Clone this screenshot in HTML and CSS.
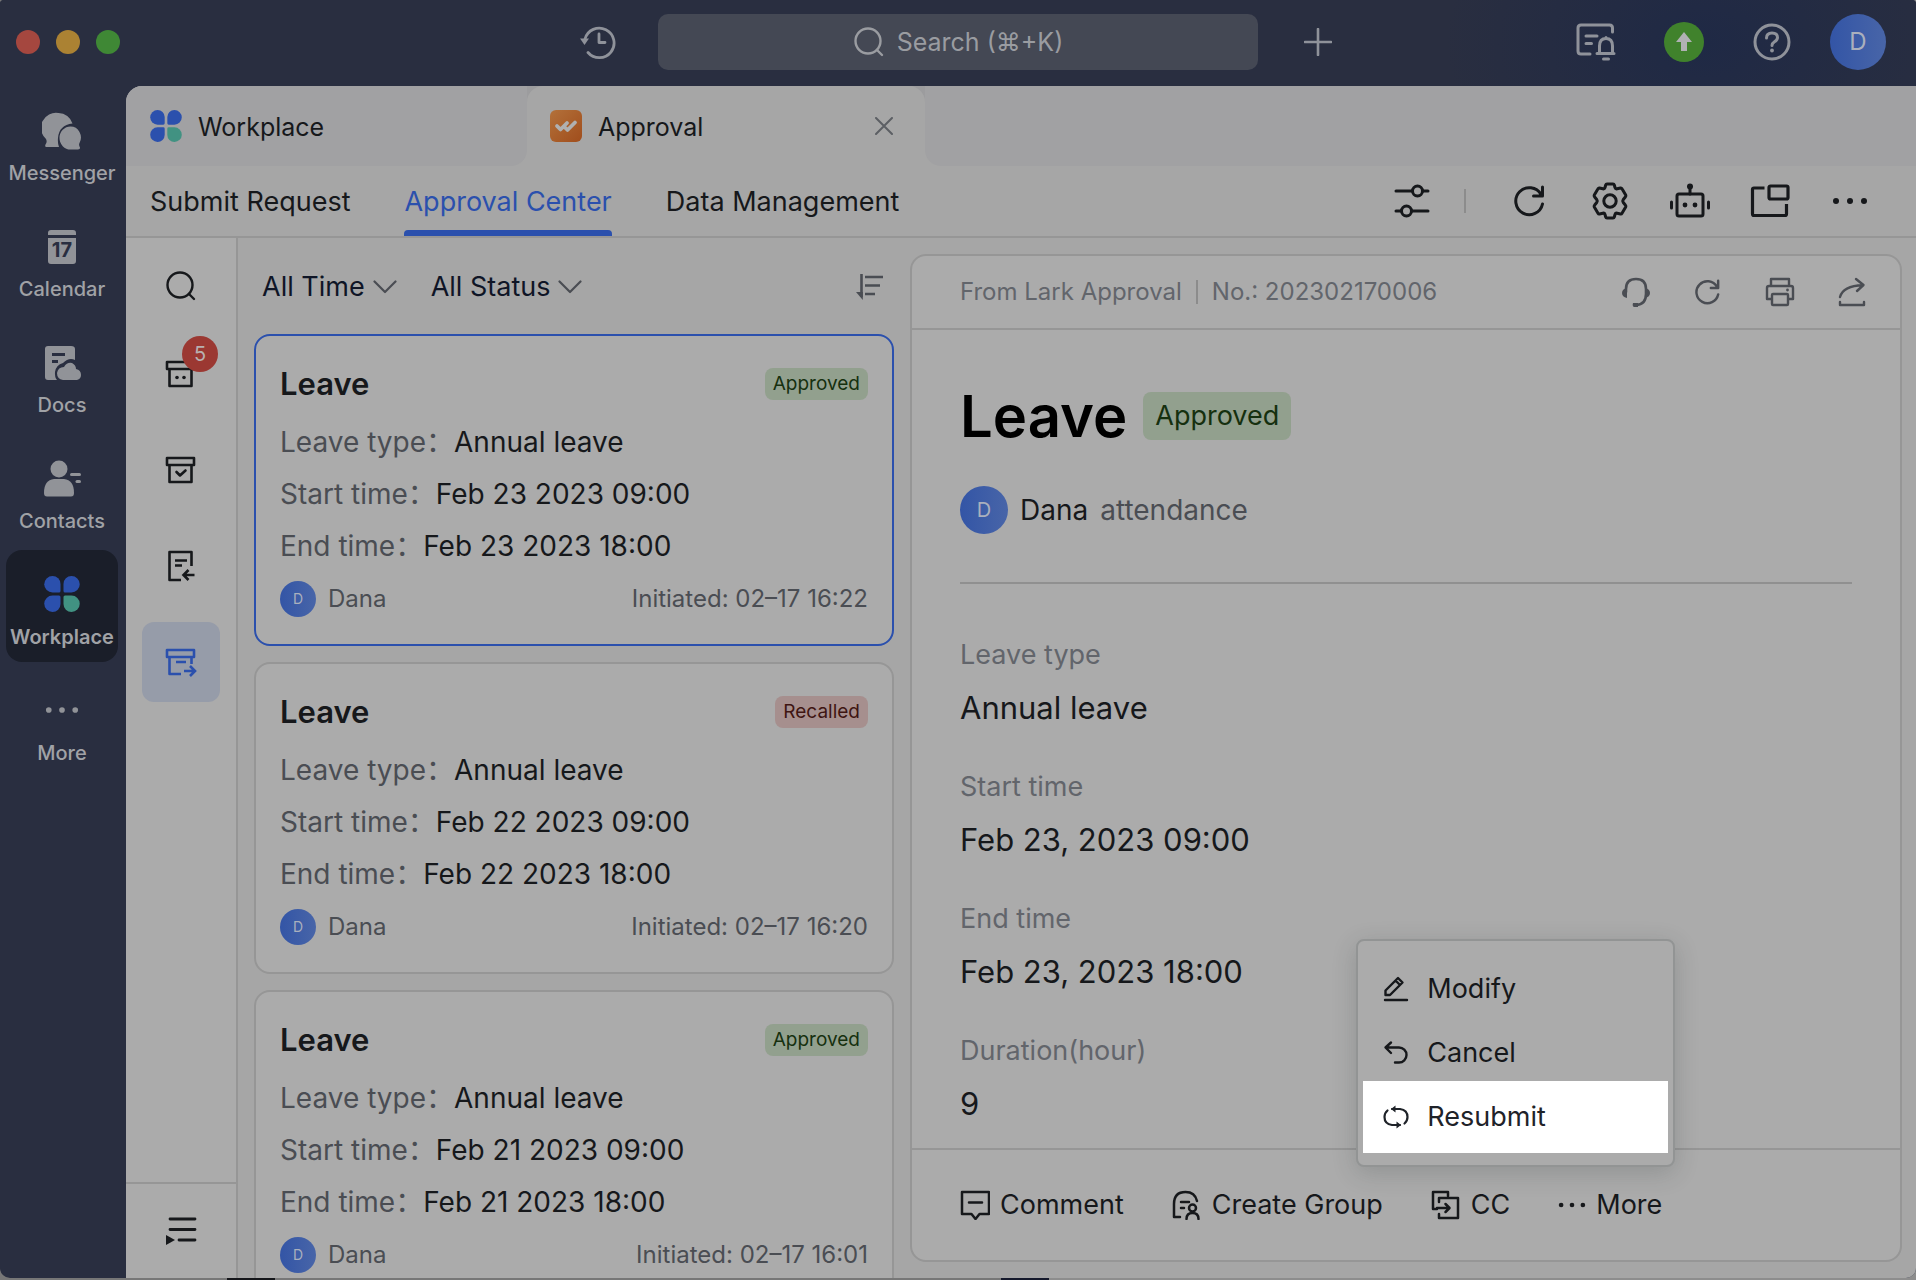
FILE: index.html
```html
<!DOCTYPE html>
<html lang="en">
<head>
<meta charset="utf-8">
<meta name="viewport" content="width=device-width, initial-scale=1">
<title>Approval</title>
<link rel="stylesheet" href="styles.css">
</head>
<body>
<svg class="sprite" aria-hidden="true">
  <symbol id="logo" viewBox="0 0 36 36">
    <g fill="#2b50ad"><path d="M8.500 0A8 8 0 0 1 16.500 8V15Q16.500 16.500 15 16.500H8.500A8.200 8.200 0 0 1 8.500 0Z"/><path d="M27.500 0A8 8 0 0 0 19.500 8V15Q19.500 16.500 21 16.500H27.500A8.200 8.200 0 0 0 27.500 0Z"/><path d="M8.500 36A8 8 0 0 0 16.500 28V21Q16.500 19.500 15 19.500H8.500A8.200 8.200 0 0 0 8.500 36Z"/></g>
    <path fill="#419282" d="M27.500 36A8 8 0 0 1 19.500 28V21Q19.500 19.500 21 19.500H27.500A8.200 8.200 0 0 1 27.500 36Z"/>
  </symbol>
  <symbol id="refresh" viewBox="0 0 32 32"><path d="M28.500 19A13.500 13.500 0 1 1 27 9.500M28.500 2V11H19.500" fill="none" stroke="currentColor" stroke-width="3" stroke-linecap="round" stroke-linejoin="round"/></symbol>
  <symbol id="dots" viewBox="0 0 36 36"><g fill="currentColor"><circle cx="4" cy="18" r="3"/><circle cx="18" cy="18" r="3"/><circle cx="32" cy="18" r="3"/></g></symbol>
  <symbol id="search" viewBox="0 0 32 32"><g fill="none" stroke="currentColor" stroke-width="2.400" stroke-linecap="round"><circle cx="15" cy="15" r="12.500"/><path d="M24 24L29 29"/></g></symbol>
  <symbol id="chevron" viewBox="0 0 24 14"><path d="M1.500 1.500L12 12L22.500 1.500" fill="none" stroke="currentColor" stroke-width="2.200" stroke-linecap="round" stroke-linejoin="round"/></symbol>
</svg>

<div class="app">
  <header class="topbar">
    <div class="lights"><span class="light red"></span><span class="light amber"></span><span class="light green"></span></div>
    <div class="top-center">
      <button class="icon-btn" aria-label="History"><svg width="36" height="36" viewBox="0 0 36 36"><g fill="none" stroke="currentColor" stroke-width="2.800" stroke-linecap="round" stroke-linejoin="round"><path d="M5 15A14.800 14.800 0 1 1 8 28.500"/><path d="M19 10V18.500H25"/></g><path fill="currentColor" d="M0 14.500H9L4.500 21Z"/></svg></button>
      <button class="search"><svg width="32" height="32"><use href="#search"/></svg><span>Search (⌘+K)</span></button>
      <button class="icon-btn plus" aria-label="New"><svg width="28" height="28" viewBox="0 0 28 28"><path d="M14 1V27M1 14H27" stroke="currentColor" stroke-width="2.600" stroke-linecap="round"/></svg></button>
    </div>
    <div class="top-right">
      <button class="icon-btn" aria-label="Notifications"><svg width="40" height="38" viewBox="0 0 40 38"><g fill="none" stroke="currentColor" stroke-width="3" stroke-linecap="round" stroke-linejoin="round"><path d="M36.500 9V5Q36.500 2 33.500 2H5Q2 2 2 5V28Q2 31 5 31H14"/><path d="M10 13H21M10 20.500H15.500"/><path d="M21 30.500H38M23.500 30V23Q23.500 15.500 30 15.500Q36.500 15.500 36.500 23V30M30 15.500V14.500M27.500 36H32.500"/></g></svg></button>
      <button class="upgrade" aria-label="Update"><svg width="20" height="22" viewBox="0 0 20 22"><path fill="#b0b1b3" d="M10 1L18 11H13V20H7V11H2Z"/></svg></button>
      <button class="icon-btn" aria-label="Help"><svg width="38" height="38" viewBox="0 0 38 38"><g fill="none" stroke="currentColor" stroke-width="3" stroke-linecap="round"><circle cx="19" cy="19" r="17"/><path d="M13.500 15Q13.500 10 19 10Q24.500 10 24.500 14.500Q24.500 17 21.500 18.800Q19 20.400 19 22.500"/></g><circle cx="19" cy="27.500" r="1.900" fill="currentColor"/></svg></button>
      <span class="avatar avatar-lg">D</span>
    </div>
  </header>

  <div class="body">
    <nav class="sidebar">
      <a href="#"><svg width="40" height="40" viewBox="0 0 40 40" fill="currentColor"><path d="M16.500 2A14.500 14.500 0 0 1 30.500 12.500Q17 14 16 27Q15.500 32 17 36H4.500Q2.500 36 3.500 33.500Q5.500 31 4 28A15 15 0 0 1 16.500 2Z"/><path d="M28.500 15.500A10.300 11 0 0 1 37.500 32Q36.500 34 38 36.500Q38.500 38.500 36 38.500H28.500A11 11.500 0 0 1 28.500 15.500Z"/></svg><span>Messenger</span></a>
      <a href="#"><svg width="40" height="40" viewBox="0 0 40 40"><path fill="currentColor" d="M6 8V6Q6 3 9 3H31Q34 3 34 6V8ZM6 11H34V34Q34 37 31 37H9Q6 37 6 34Z"/><text x="20" y="30" text-anchor="middle" class="cal-day">17</text></svg><span>Calendar</span></a>
      <a href="#"><svg width="40" height="40" viewBox="0 0 40 40"><path fill="currentColor" fill-rule="evenodd" d="M6 3H29Q33 3 33 6V17Q27 14 21 20Q14 22 13 29Q12.500 34 15 37H6Q3 37 3 34V6Q3 3 6 3ZM10 10V13H23V10ZM10 17V20H16V17Z"/><path fill="currentColor" d="M21 37Q15 36 15 30Q16 24 22 24Q25 19 30 20Q34 22 34 26Q39 27 39 32Q39 36 35 37Z"/></svg><span>Docs</span></a>
      <a href="#"><svg width="40" height="40" viewBox="0 0 40 40" fill="currentColor"><circle cx="17" cy="10" r="8.500"/><path d="M12 20H22Q32 21 32 34Q32 37.500 29 37.500H5Q2 37.500 2 34Q2 21 12 20Z"/><rect x="28" y="14" width="11" height="3" rx="1.500"/><rect x="33.500" y="21" width="5.500" height="3" rx="1.500"/></svg><span>Contacts</span></a>
      <a href="#" class="current"><svg width="40" height="40"><use href="#logo" x="2" y="1" width="36" height="36"/></svg><span>Workplace</span></a>
      <a href="#"><svg width="34" height="40"><use href="#dots" y="-1"/></svg><span>More</span></a>
    </nav>

    <main class="window">
      <div class="tabs">
        <a href="#" class="tab"><svg width="32" height="32"><use href="#logo"/></svg><span>Workplace</span></a>
        <div class="tab-slot">
          <div class="tab active"><svg width="32" height="32" viewBox="0 0 32 32"><defs><linearGradient id="og" x1="0" y1="0" x2="1" y2="1"><stop offset="0" stop-color="#b3713a"/><stop offset="1" stop-color="#a04d1c"/></linearGradient></defs><rect width="32" height="32" rx="6" fill="url(#og)"/><path d="M7 16L10.500 19.500L17 13M15 17.500L17.500 20L25 12.500" fill="none" stroke="#b0b0b0" stroke-width="3.800" stroke-linecap="round" stroke-linejoin="round"/></svg><span>Approval</span>
            <button class="close" aria-label="Close tab"><svg width="18" height="18" viewBox="0 0 18 18"><path d="M1 1L17 17M17 1L1 17" stroke="currentColor" stroke-width="2" stroke-linecap="round"/></svg></button></div>
        </div>
        <div class="tab-rest"></div>
      </div>

      <div class="navbar">
        <a href="#">Submit Request</a>
        <a href="#" class="selected">Approval Center</a>
        <a href="#">Data Management</a>
        <div class="tools">
          <button class="icon-btn" aria-label="Filters"><svg width="36" height="36" viewBox="0 0 36 36"><g fill="none" stroke="currentColor" stroke-width="3" stroke-linecap="round"><path d="M2 8H18M29 8H34M2 28H7M18 28H34"/><circle cx="23.500" cy="8" r="5"/><circle cx="12.500" cy="28" r="5"/></g></svg></button>
          <span class="tool-sep"></span>
          <button class="icon-btn" aria-label="Refresh"><svg width="32" height="32"><use href="#refresh"/></svg></button>
          <button class="icon-btn" aria-label="Settings"><svg width="36" height="38" viewBox="0 0 36 38"><g fill="none" stroke="currentColor" stroke-width="3" stroke-linejoin="round"><path d="M15 2H21Q22 2 22.300 3L23 5.500Q23.500 7.200 25.200 6.800L28.500 6Q29.500 5.800 30 6.700L33.700 13Q34.200 14 33.500 14.800L31.300 17.500Q30.200 19 31.300 20.500L33.500 23.200Q34.200 24 33.700 25L30 31.300Q29.500 32.200 28.500 32L25.200 31.200Q23.500 30.800 23 32.500L22.300 35Q22 36 21 36H15Q14 36 13.700 35L13 32.500Q12.500 30.800 10.800 31.200L7.500 32Q6.500 32.200 6 31.300L2.300 25Q1.800 24 2.500 23.200L4.700 20.500Q5.800 19 4.700 17.500L2.500 14.800Q1.800 14 2.300 13L6 6.700Q6.500 5.800 7.500 6L10.800 6.800Q12.500 7.200 13 5.500L13.700 3Q14 2 15 2Z"/><circle cx="18" cy="19" r="6.200"/></g></svg></button>
          <button class="icon-btn" aria-label="Bot"><svg width="40" height="36" viewBox="0 0 40 36"><g fill="none" stroke="currentColor" stroke-width="3" stroke-linecap="round"><rect x="7" y="11" width="26" height="22" rx="2"/><path d="M20 4V11M1.500 19V25M38.500 19V25"/></g><g fill="currentColor"><circle cx="20" cy="3.500" r="3"/><circle cx="15" cy="22" r="2.400"/><circle cx="25" cy="22" r="2.400"/></g></svg></button>
          <button class="icon-btn" aria-label="Float window"><svg width="40" height="34" viewBox="0 0 40 34"><g fill="none" stroke="currentColor" stroke-width="3.200" stroke-linecap="butt" stroke-linejoin="round"><path d="M14.500 4H4Q2.500 4 2.500 5.500V30Q2.500 31.500 4 31.500H35Q36.500 31.500 36.500 30V20"/><rect x="19" y="2" width="19" height="13" rx="1.500"/></g></svg></button>
          <button class="icon-btn" aria-label="More"><svg width="36" height="36"><use href="#dots"/></svg></button>
        </div>
      </div>

      <div class="workspace">
        <aside class="rail">
          <button class="rail-search" aria-label="Search"><svg width="32" height="32"><use href="#search"/></svg></button>
          <button class="rail-item" aria-label="To do"><svg width="32" height="32" viewBox="0 0 32 32"><g fill="none" stroke="currentColor" stroke-width="2.600" stroke-linejoin="round"><path d="M2 4H29V11H2ZM4.500 11V28H26.500V11"/></g><circle cx="12" cy="19.500" r="1.800" fill="currentColor"/><circle cx="19" cy="19.500" r="1.800" fill="currentColor"/></svg><span class="badge">5</span></button>
          <button class="rail-item" aria-label="Done"><svg width="32" height="32" viewBox="0 0 32 32"><g fill="none" stroke="currentColor" stroke-width="2.600" stroke-linejoin="round" stroke-linecap="round"><path d="M2 4H29V11H2ZM4.500 11V28H26.500V11M11.500 18L15 21.500L20.500 16.500"/></g></svg></button>
          <button class="rail-item" aria-label="CC'd"><svg width="32" height="32" viewBox="0 0 32 32"><g fill="none" stroke="currentColor" stroke-width="2.600"><path d="M26.500 16V2H4.500V30H16M10 10.500H22M10 15.500H17" stroke-linejoin="round"/><path d="M29.500 25H19.500M23.500 20L18.500 25L23.500 30"/></g></svg></button>
          <button class="rail-item on" aria-label="Submitted"><svg width="32" height="32" viewBox="0 0 32 32"><g fill="none" stroke="currentColor" stroke-width="2.600"><path d="M26.500 18V11H29V4H2V11H26.500M4.500 11V28H16M11 16H21" stroke-linejoin="round"/><path d="M19 25H30M25 20L30 25L25 30"/></g></svg></button>
          <button class="rail-foot" aria-label="Expand"><svg width="32" height="32" viewBox="0 0 32 32"><path d="M5 4H30M5 14.500H30M14 25H30" stroke="currentColor" stroke-width="2.800" stroke-linecap="round"/><path fill="currentColor" d="M1 20V30L10 25Z"/></svg></button>
        </aside>

        <section class="list">
          <div class="filters">
            <button>All Time<svg width="24" height="14"><use href="#chevron"/></svg></button>
            <button>All Status<svg width="24" height="14"><use href="#chevron"/></svg></button>
            <button class="sort" aria-label="Sort"><svg width="28" height="28" viewBox="0 0 28 28"><g stroke="currentColor" stroke-width="2.600"><path d="M5.500 1V24M9 4H27M9 12.500H24M9 21H19"/></g><path fill="currentColor" d="M0 19H6.800V27Z"/></svg></button>
          </div>

          <article class="card chosen">
            <div class="card-head"><h2>Leave</h2><span class="tag">Approved</span></div>
            <p><span>Leave type：</span>Annual leave</p>
            <p><span>Start time：</span>Feb 23 2023 09:00</p>
            <p><span>End time：</span>Feb 23 2023 18:00</p>
            <div class="card-foot"><span class="avatar avatar-sm">D</span><span>Dana</span><time>Initiated: 02–17 16:22</time></div>
          </article>
          <article class="card">
            <div class="card-head"><h2>Leave</h2><span class="tag recalled">Recalled</span></div>
            <p><span>Leave type：</span>Annual leave</p>
            <p><span>Start time：</span>Feb 22 2023 09:00</p>
            <p><span>End time：</span>Feb 22 2023 18:00</p>
            <div class="card-foot"><span class="avatar avatar-sm">D</span><span>Dana</span><time>Initiated: 02–17 16:20</time></div>
          </article>
          <article class="card">
            <div class="card-head"><h2>Leave</h2><span class="tag">Approved</span></div>
            <p><span>Leave type：</span>Annual leave</p>
            <p><span>Start time：</span>Feb 21 2023 09:00</p>
            <p><span>End time：</span>Feb 21 2023 18:00</p>
            <div class="card-foot"><span class="avatar avatar-sm">D</span><span>Dana</span><time>Initiated: 02–17 16:01</time></div>
          </article>
        </section>

        <section class="detail">
          <div class="detail-bar">
            <span>From Lark Approval</span><span class="bar-sep"></span><span>No.: 202302170006</span>
            <div class="detail-tools">
              <button class="icon-btn" aria-label="Support"><svg width="28" height="30" viewBox="0 0 28 30"><g fill="none" stroke="currentColor" stroke-width="2.600" stroke-linecap="round"><path d="M4 15V12Q4 2 14 2Q24 2 24 12V17Q24 27.500 14 28"/></g><path fill="currentColor" d="M5 11V21Q0 20 0 16Q0 12 5 11ZM23 11V21Q28 20 28 16Q28 12 23 11ZM11 26H16V30H12Q10 29 11 26Z"/></svg></button>
              <button class="icon-btn" aria-label="Refresh"><svg width="26" height="26"><use href="#refresh"/></svg></button>
              <button class="icon-btn" aria-label="Print"><svg width="30" height="30" viewBox="0 0 30 30"><g fill="none" stroke="currentColor" stroke-width="2.400" stroke-linejoin="round"><path d="M6 9V2H24V9M7 22H2V11Q2 9 4 9H26Q28 9 28 11V22H23"/><rect x="7" y="17" width="16" height="11" rx="1"/></g><circle cx="22.500" cy="13" r="1.400" fill="currentColor"/></svg></button>
              <button class="icon-btn" aria-label="Share"><svg width="28" height="30" viewBox="0 0 28 30"><g fill="none" stroke="currentColor" stroke-width="2.400" stroke-linecap="round" stroke-linejoin="round"><path d="M2 20Q5 9 25 8M18 2L25.500 8L19 14M2 25V28H26V25"/></g></svg></button>
            </div>
          </div>

          <div class="detail-body">
            <div class="title"><h1>Leave</h1><span class="tag big">Approved</span></div>
            <div class="person"><span class="avatar avatar-md">D</span><span>Dana</span><span class="dept">attendance</span></div>
            <dl>
              <dt>Leave type</dt><dd>Annual leave</dd>
              <dt>Start time</dt><dd>Feb 23, 2023 09:00</dd>
              <dt>End time</dt><dd>Feb 23, 2023 18:00</dd>
              <dt>Duration(hour)</dt><dd>9</dd>
            </dl>
          </div>

          <div class="actions">
            <button><svg width="30" height="30" viewBox="0 0 30 30"><path d="M2 2H29V24H19.500L15.500 29L11.500 24H2ZM9 12.500H22" fill="none" stroke="currentColor" stroke-width="2.500" stroke-linejoin="round" stroke-linecap="round"/></svg>Comment</button>
            <button><svg width="30" height="30" viewBox="0 0 30 30"><g fill="none" stroke="currentColor" stroke-width="2.500" stroke-linecap="round" stroke-linejoin="round"><path d="M8 27H2V14Q2 2 13.500 2Q23 2 25 11M9 12H17M9 18H12"/><circle cx="20.500" cy="18" r="3.500"/><path d="M14.500 29Q14.500 23 20.500 23Q26.500 23 26.500 29"/></g></svg>Create Group</button>
            <button><svg width="30" height="30" viewBox="0 0 30 30"><g fill="none" stroke="currentColor" stroke-width="2.500" stroke-linejoin="round" stroke-linecap="round"><path d="M6 19H2V2H17V6M8 12V8H27V28H8V24M6 18H18M14.500 14L18.500 18L14.500 22"/></g></svg>CC</button>
            <div class="more-wrap">
              <button><svg width="28" height="28"><use href="#dots"/></svg>More</button>
              <div class="menu" role="menu">
                <button role="menuitem"><svg width="26" height="26" viewBox="0 0 26 26"><g fill="none" stroke="currentColor" stroke-width="2.400" stroke-linejoin="round" stroke-linecap="round"><path d="M2.500 19V14.500L15 2L19.500 6.500L7 19ZM12.500 4.500L17 9M2 24H24"/></g></svg>Modify</button>
                <button role="menuitem"><svg width="26" height="26" viewBox="0 0 26 26"><path d="M8 2.500L2.500 7.500L8 13M3 7.500H16A7.500 7.500 0 0 1 16 22.500H12" fill="none" stroke="currentColor" stroke-width="2.400" stroke-linejoin="round" stroke-linecap="round"/></svg>Cancel</button>
                <button role="menuitem" class="focus"><svg width="26" height="26" viewBox="0 0 26 26"><g fill="none" stroke="currentColor" stroke-width="2.200" stroke-linecap="round"><path d="M9 5H17Q24.500 6 24.500 13Q24.500 17 21.500 19.500M17 21H9Q1.500 20 1.500 13Q1.500 9 4.500 6.500"/></g><path fill="currentColor" d="M8 5L12.500 1.500V8.500ZM18 21L13.500 17.500V24.500Z"/></svg>Resubmit</button>
              </div>
            </div>
          </div>
        </section>
      </div>
    </main>
  </div>
</div>
</body>
</html>
```

FILE: styles.css
```css
* { box-sizing: border-box; }

:root {
  --ink: #16181b;
  --ink-2: #4a4d53;
  --ink-3: #62656b;
  --line: #969696;
  --page: #a6a6a6;
  --panel: #ababab;
  --blue: #2b50ad;
  --navy: #292e40;
}

body {
  margin: 0;
  font-family: Inter, "Noto Sans CJK SC", "DejaVu Sans", sans-serif;
  font-size: 27px;
  line-height: 36px;
  color: var(--ink);
  background: linear-gradient(90deg, #777 0 227px, #15161a 227px 275px, #777 275px 1001px, #15192c 1001px 1049px, #8d8d8d 1049px);
}

h1, h2, p, dl, dd { margin: 0; }
a { color: inherit; text-decoration: none; }
button { font: inherit; color: inherit; background: none; border: 0; padding: 0; display: flex; align-items: center; cursor: pointer; }
svg { display: block; flex: none; }
.sprite { position: absolute; width: 0; height: 0; }

.app {
  display: flex;
  flex-direction: column;
  height: calc(100vh - 2px);
  overflow: hidden;
  border-radius: 4px 4px 10px 10px;
  background: var(--navy);
}

/* top bar */
.topbar {
  flex: none;
  display: grid;
  grid-template-columns: 1fr auto 1fr;
  align-items: center;
  height: 86px;
  padding: 0 16px 2px;
  color: #8f929a;
  background: radial-gradient(ellipse 260px 180px at 89% 50%, #1f2945, transparent), var(--navy);
}
.lights { display: flex; gap: 16px; }
.light { width: 24px; height: 24px; border-radius: 50%; }
.red { background: #a5473f; }
.amber { background: #ab8233; }
.green { background: #3f8835; }
.top-center { display: flex; align-items: center; gap: 42px; }
.plus { width: 36px; justify-content: center; }
.search {
  justify-content: center;
  gap: 12px;
  width: 31.3vw;
  height: 56px;
  border-radius: 10px;
  background: #444854;
  font-size: 25px;
  color: #9a9ca1;
}
.top-right { display: flex; justify-content: flex-end; align-items: center; padding-right: 14px; }
.top-right .icon-btn { width: 88px; justify-content: center; }
.upgrade { width: 40px; height: 40px; margin: 0 24px; border-radius: 50%; background: #40822c; justify-content: center; }
.avatar { display: grid; place-items: center; flex: none; border-radius: 50%; color: #aab0bd; background: linear-gradient(90deg, #3355a6, #4865a8); }
.avatar-lg { width: 56px; height: 56px; margin-left: 14px; font-size: 24px; }
.avatar-md { width: 48px; height: 48px; font-size: 20px; }
.avatar-sm { width: 36px; height: 36px; font-size: 14px; }

.body { flex: 1; min-height: 0; display: flex; }

/* app sidebar */
.sidebar { flex: none; width: 126px; display: flex; flex-direction: column; gap: 4px; padding: 0 8px 0 6px; color: #919398; }
.sidebar a {
  display: flex;
  flex-direction: column;
  align-items: center;
  gap: 10px;
  height: 112px;
  padding-top: 25px;
  border-radius: 16px;
  font-size: 20px;
  font-weight: 500;
  line-height: 24px;
}
.sidebar span { color: #a0a2a6; }
.sidebar .current { background: #1a1e29; }
.sidebar .current span { font-weight: 600; }
.cal-day { font-size: 20px; font-weight: 700; fill: var(--navy); }

/* main window */
.window { flex: 1; min-width: 0; display: flex; flex-direction: column; border-top-left-radius: 16px; overflow: hidden; background: var(--page); }
.tabs { flex: none; display: flex; height: 80px; }
.tab { display: flex; align-items: center; gap: 16px; width: 401px; padding-left: 24px; background: #a1a1a3; border-bottom-right-radius: 16px; font-size: 25px; }
.tab span { padding-top: 2px; }
.tab-slot { width: 398px; background: linear-gradient(#9c9c9e 50%, var(--page) 50%); }
.tab.active { width: 100%; height: 100%; padding: 0 32px 0 23px; border-radius: 16px 16px 0 0; background: var(--page); }
.close { margin-left: auto; color: #5c5f64; }
.tab-rest { flex: 1; border-bottom-left-radius: 16px; background: #a1a1a3; }

.navbar { flex: none; display: flex; gap: 54px; height: 72px; padding: 0 26px 0 24px; border-bottom: 2px solid var(--line); }
.navbar > a { display: flex; align-items: center; border-bottom: 6px solid transparent; padding-top: 8px; }
.navbar > .selected { color: var(--blue); position: relative; }
.selected::after { content: ""; position: absolute; left: 0; right: 0; bottom: -6px; height: 6px; border-radius: 4px 4px 0 0; background: var(--blue); }
.tools { margin-left: auto; display: flex; align-items: center; }
.tools .icon-btn { width: 80px; justify-content: center; }
.tool-sep { width: 2px; height: 24px; margin: 0 24px 0 12px; background: #8c8c8c; }

.workspace { flex: 1; min-height: 0; display: flex; }

/* category rail */
.rail { flex: none; width: 112px; display: flex; flex-direction: column; align-items: center; gap: 16px; border-right: 2px solid var(--line); background: var(--panel); }
.rail-search { height: 96px; margin-bottom: -16px; }
.rail-item { position: relative; width: 78px; height: 80px; justify-content: center; border-radius: 12px; }
.rail-item.on { background: #969ca9; color: var(--blue); }
.badge { position: absolute; top: 2px; right: 2px; width: 36px; height: 36px; border-radius: 50%; background: #9b3832; color: #b8b0b0; font-size: 20px; line-height: 36px; text-align: center; }
.rail-foot { width: 100%; height: 96px; margin-top: auto; justify-content: center; border-top: 2px solid var(--line); }

/* request list */
.list { flex: 0 0 672px; display: flex; flex-direction: column; gap: 16px; padding: 0 16px; overflow: hidden; }
.filters { flex: none; display: flex; align-items: center; gap: 34px; height: 96px; margin-bottom: -16px; padding: 2px 10px 0 8px; color: #0f1526; }
.filters button { gap: 8px; }
.filters svg { color: var(--ink-2); }
.filters .sort { margin-left: auto; }
.card { flex: none; height: 312px; padding: 28px 24px; border: 2px solid var(--line); border-radius: 16px; background: var(--panel); }
.card.chosen { border-color: var(--blue); }
.card-head { display: flex; align-items: center; justify-content: space-between; height: 40px; margin-bottom: 12px; }
.card h2 { font-size: 31px; font-weight: 600; }
.card p { font-size: 28px; line-height: 52px; height: 52px; }
.card p span { color: var(--ink-2); }
.tag { display: flex; align-items: center; height: 32px; padding: 0 8px; border-radius: 8px; font-size: 19px; color: #16300f; background: #92a08e; }
.tag.recalled { color: #3f1512; background: #a68f8e; }
.tag.big { height: 48px; padding: 0 12px; font-size: 27px; }
.card-foot { display: flex; align-items: center; gap: 12px; height: 54px; font-size: 24px; color: var(--ink-2); }
.card-foot time { margin-left: auto; }

/* request detail */
.detail { flex: 1; min-width: 0; display: flex; flex-direction: column; margin: 16px 14px 16px 0; border: 2px solid var(--line); border-radius: 16px; background: var(--panel); }
.detail-bar { flex: none; display: flex; align-items: center; gap: 14px; height: 74px; padding: 0 34px 0 48px; border-bottom: 2px solid var(--line); font-size: 24px; color: var(--ink-3); }
.bar-sep { width: 2px; height: 24px; background: #8c8c8c; }
.detail-tools { margin-left: auto; display: flex; color: var(--ink-2); }
.detail-tools .icon-btn { width: 72px; height: 36px; justify-content: center; }
.detail-tools .icon-btn:last-child { width: 28px; margin-left: 22px; }
.detail-body { flex: 1; min-height: 0; padding: 54px 48px 0; overflow: hidden; }
.title { display: flex; align-items: center; gap: 16px; height: 64px; }
.title h1 { font-size: 58px; font-weight: 600; line-height: 64px; color: #000; }
.person { display: flex; align-items: center; gap: 12px; height: 136px; padding-bottom: 10px; border-bottom: 2px solid #909090; font-size: 28px; }
.dept { color: var(--ink-2); }
.detail dl { padding-top: 45px; }
.detail dt { line-height: 52px; color: var(--ink-3); }
.detail dd { line-height: 54px; margin-bottom: 26px; font-size: 31px; }
.actions { flex: none; display: flex; align-items: center; gap: 48px; height: 112px; padding: 0 48px; border-top: 2px solid var(--line); }
.actions > button, .more-wrap > button { gap: 10px; }
.more-wrap { position: relative; }
.menu { position: absolute; left: -202px; bottom: 56px; width: 319px; padding: 16px 5px 12px; border: 2px solid #929494; border-radius: 8px; background: var(--panel); box-shadow: 0 6px 24px rgba(40, 50, 50, .2); }
.menu button { width: 100%; height: 64px; gap: 18px; padding-left: 20px; }
.menu .focus { height: 72px; margin-top: -4px; background: #fff; color: #1f2329; }
```
